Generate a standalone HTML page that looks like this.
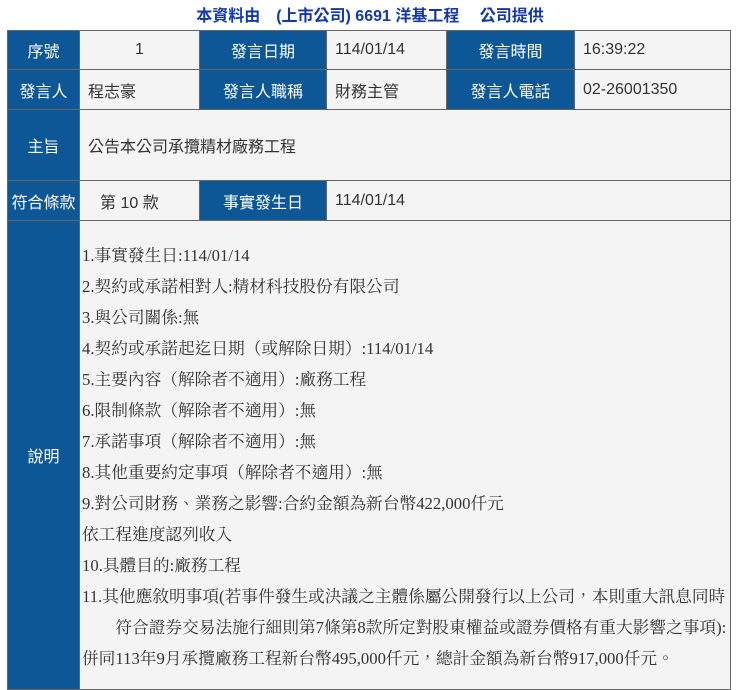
<!DOCTYPE html>
<html><head><meta charset="utf-8"><style>
body{margin:0;width:740px;height:677px;overflow:hidden;background:#fff;font-family:"Liberation Sans","Noto Sans CJK TC",sans-serif;}
.h{position:absolute;top:2px;left:0;width:740px;text-align:center;color:#1438a8;font-weight:bold;font-size:16px;white-space:pre;}
.c{position:absolute;box-sizing:border-box;border:1px solid #666;font-size:16px;color:#333;background:#f4f4f4;display:flex;align-items:center;padding-left:8px;white-space:nowrap;}
.b{background:#0e5796;color:#fff;justify-content:center;padding-left:0;}
.ctr{justify-content:center;padding-left:0;}
.d{position:absolute;left:82px;top:240px;font-family:"Liberation Serif","Noto Serif CJK TC","Noto Serif CJK SC",serif;font-size:16.7px;line-height:31px;color:#333;white-space:nowrap;}
</style></head><body>
<div class="h">本資料由　(上市公司) 6691 洋基工程　 公司提供</div>
<div class="c b" style="left:7px;top:30px;width:73px;height:40px">序號</div>
<div class="c ctr" style="left:79px;top:30px;width:121px;height:40px">1</div>
<div class="c b" style="left:199px;top:30px;width:128px;height:40px">發言日期</div>
<div class="c" style="left:326px;top:30px;width:121px;height:40px">114/01/14</div>
<div class="c b" style="left:446px;top:30px;width:129px;height:40px">發言時間</div>
<div class="c" style="left:574px;top:30px;width:157px;height:40px">16:39:22</div>

<div class="c b" style="left:7px;top:69px;width:73px;height:41px">發言人</div>
<div class="c" style="left:79px;top:69px;width:121px;height:41px">程志豪</div>
<div class="c b" style="left:199px;top:69px;width:128px;height:41px">發言人職稱</div>
<div class="c" style="left:326px;top:69px;width:121px;height:41px">財務主管</div>
<div class="c b" style="left:446px;top:69px;width:129px;height:41px">發言人電話</div>
<div class="c" style="left:574px;top:69px;width:157px;height:41px">02-26001350</div>

<div class="c b" style="left:7px;top:109px;width:73px;height:72px">主旨</div>
<div class="c" style="left:79px;top:109px;width:652px;height:72px">公告本公司承攬精材廠務工程</div>

<div class="c b" style="left:7px;top:180px;width:73px;height:41px">符合條款</div>
<div class="c" style="left:79px;top:180px;width:121px;height:41px;padding-left:20px">第 10 款</div>
<div class="c b" style="left:199px;top:180px;width:128px;height:41px">事實發生日</div>
<div class="c" style="left:326px;top:180px;width:405px;height:41px">114/01/14</div>

<div class="c b" style="left:7px;top:220px;width:73px;height:470px">說明</div>
<div class="c" style="left:79px;top:220px;width:652px;height:470px"></div>
<div class="d">1.事實發生日:114/01/14<br>2.契約或承諾相對人:精材科技股份有限公司<br>3.與公司關係:無<br>4.契約或承諾起迄日期（或解除日期）:114/01/14<br>5.主要內容（解除者不適用）:廠務工程<br>6.限制條款（解除者不適用）:無<br>7.承諾事項（解除者不適用）:無<br>8.其他重要約定事項（解除者不適用）:無<br>9.對公司財務、業務之影響:合約金額為新台幣422,000仟元<br>依工程進度認列收入<br>10.具體目的:廠務工程<br>11.其他應敘明事項(若事件發生或決議之主體係屬公開發行以上公司，本則重大訊息同時<br>　　符合證券交易法施行細則第7條第8款所定對股東權益或證券價格有重大影響之事項):<br>併同113年9月承攬廠務工程新台幣495,000仟元，總計金額為新台幣917,000仟元。</div>
</body></html>
